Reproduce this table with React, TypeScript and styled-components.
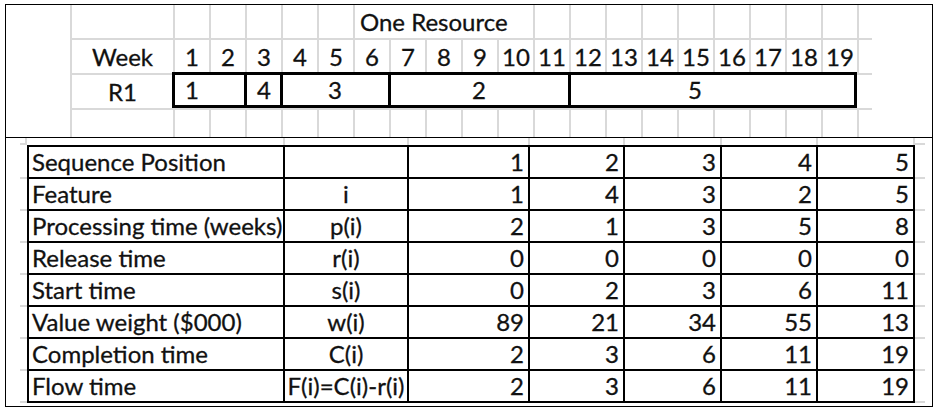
import React from "react";
import styled, { createGlobalStyle } from "styled-components";

const GlobalStyle = createGlobalStyle`
  html, body { margin: 0; padding: 0; background: #ffffff; }
  body { font-family: Lato, "Liberation Sans", sans-serif; color: #111111; }
`;

const GRID = "#d9d9d9";
const INK = "#111111";

const Page = styled.div`
  width: 940px;
  height: 416px;
  box-sizing: border-box;
  padding: 4px 0 0 5px;
  background: #ffffff;
`;

const Frame = styled.div`
  width: 928px;
  box-sizing: border-box;
  border: 1px solid #000;
  display: flex;
  flex-direction: column;
`;

/* ---------- top: one resource gantt ---------- */

const TopSection = styled.section`
  height: 133px;
  box-sizing: border-box;
  border-bottom: 1px solid #000;
`;

const GanttGrid = styled.div`
  display: grid;
  grid-template-columns: 64px 103px repeat(19, 36px) 15px 1fr;
  grid-template-rows: 33px 35px 35px 1fr;
  height: 100%;
`;

const GanttCell = styled.div<{ $left?: boolean; $top?: boolean; $span?: number; $align?: string }>`
  box-sizing: border-box;
  display: flex;
  align-items: center;
  justify-content: ${(p) => p.$align ?? "center"};
  grid-column: ${(p) => (p.$span ? `span ${p.$span}` : "auto")};
  border-left: ${(p) => (p.$left ? `2px solid ${GRID}` : "none")};
  border-top: ${(p) => (p.$top ? `2px solid ${GRID}` : "none")};
  padding: ${(p) => (p.$align === "flex-start" ? "0 0 0 5px" : "0")};
  font-size: 24px;
  line-height: 1;
  white-space: nowrap;
  color: ${INK};
  -webkit-text-stroke: 0.3px ${INK};
`;

const BoxCell = styled.div<{ $start?: boolean; $end?: boolean }>`
  box-sizing: border-box;
  display: flex;
  align-items: center;
  justify-content: center;
  border-top: 3px solid #000;
  border-bottom: 3px solid #000;
  border-left: ${(p) => (p.$start ? "3px solid #000" : "none")};
  border-right: ${(p) => (p.$end ? "3px solid #000" : "none")};
  margin-left: ${(p) => (p.$start ? "-1px" : "0")};
  margin-top: -1px;
  font-size: 24px;
  line-height: 1;
  color: ${INK};
  -webkit-text-stroke: 0.3px ${INK};
`;

/* ---------- bottom: sequence table ---------- */

const BottomSection = styled.section`
  height: 268px;
  box-sizing: border-box;
  padding-left: 14px;
`;

const Sheet = styled.div`
  display: grid;
  grid-template-columns: 7px 258px 124px 121px 95px 97px 96px 97px 10px;
  grid-template-rows: 7px 34px repeat(7, 32px);
`;

const Margin = styled.div<{ $right?: boolean; $bottom?: boolean }>`
  box-sizing: border-box;
  border-right: ${(p) => (p.$right ? `2px solid ${GRID}` : "none")};
  border-bottom: ${(p) => (p.$bottom ? `2px solid ${GRID}` : "none")};
`;

const DataCell = styled.div<{ $first?: boolean; $head?: boolean; $align: "left" | "center" | "right" }>`
  box-sizing: border-box;
  display: flex;
  align-items: center;
  justify-content: ${(p) => (p.$align === "left" ? "flex-start" : p.$align === "right" ? "flex-end" : "center")};
  padding: ${(p) => (p.$align === "left" ? "0 0 0 3px" : p.$align === "right" ? "0 4px 0 0" : "0")};
  border-right: 2px solid #000;
  border-bottom: 2px solid #000;
  border-left: ${(p) => (p.$first ? "2px solid #000" : "none")};
  border-top: ${(p) => (p.$head ? "2px solid #000" : "none")};
  font-size: 24px;
  line-height: 1;
  white-space: nowrap;
  color: ${INK};
  -webkit-text-stroke: 0.3px ${INK};
`;

const weeks = Array.from({ length: 19 }, (_, i) => i + 1);

// segments: [start week, length, label week, label]
const segments: Array<[number, number, number, string]> = [
  [1, 2, 1, "1"],
  [3, 1, 3, "4"],
  [4, 3, 5, "3"],
  [7, 5, 9, "2"],
  [12, 8, 15, "5"],
];

const rows: Array<[string, string, ...number[]]> = [
  ["Sequence Position", "", 1, 2, 3, 4, 5],
  ["Feature", "i", 1, 4, 3, 2, 5],
  ["Processing time (weeks)", "p(i)", 2, 1, 3, 5, 8],
  ["Release time", "r(i)", 0, 0, 0, 0, 0],
  ["Start time", "s(i)", 0, 2, 3, 6, 11],
  ["Value weight ($000)", "w(i)", 89, 21, 34, 55, 13],
  ["Completion time", "C(i)", 2, 3, 6, 11, 19],
  ["Flow time", "F(i)=C(i)-r(i)", 2, 3, 6, 11, 19],
];

function Gantt() {
  const cells: React.ReactNode[] = [];
  // row 1
  cells.push(<GanttCell key="r1-0" />);
  cells.push(<GanttCell key="r1-a" $left />);
  for (let w = 1; w <= 5; w++) cells.push(<GanttCell key={`r1-${w}`} $left />);
  cells.push(
    <GanttCell key="r1-title" $left $span={5} $align="flex-start">
      One Resource
    </GanttCell>
  );
  for (let w = 11; w <= 19; w++) cells.push(<GanttCell key={`r1-${w}`} $left />);
  cells.push(<GanttCell key="r1-p" $left />);
  cells.push(<GanttCell key="r1-e" />);

  // row 2
  cells.push(<GanttCell key="r2-0" />);
  cells.push(
    <GanttCell key="r2-a" $left $top>
      Week
    </GanttCell>
  );
  weeks.forEach((w) =>
    cells.push(
      <GanttCell key={`r2-${w}`} $left $top>
        {w}
      </GanttCell>
    )
  );
  cells.push(<GanttCell key="r2-p" $left $top />);
  cells.push(<GanttCell key="r2-e" />);

  // row 3
  cells.push(<GanttCell key="r3-0" />);
  cells.push(
    <GanttCell key="r3-a" $left $top>
      R1
    </GanttCell>
  );
  weeks.forEach((w) => {
    const seg = segments.find((s) => w >= s[0] && w < s[0] + s[1])!;
    const label = seg[2] === w ? seg[3] : "";
    cells.push(
      <BoxCell key={`r3-${w}`} $start={seg[0] === w} $end={w === 19}>
        {label}
      </BoxCell>
    );
  });
  cells.push(<GanttCell key="r3-p" $top />);
  cells.push(<GanttCell key="r3-e" />);

  // row 4
  cells.push(<GanttCell key="r4-0" />);
  cells.push(<GanttCell key="r4-a" $left $top />);
  weeks.forEach((w) => cells.push(<GanttCell key={`r4-${w}`} $left $top />));
  cells.push(<GanttCell key="r4-p" $left $top />);
  cells.push(<GanttCell key="r4-e" />);

  return <GanttGrid>{cells}</GanttGrid>;
}

function SequenceTable() {
  const cells: React.ReactNode[] = [];
  // top margin row
  cells.push(<Margin key="m-tl" $right $bottom />);
  for (let c = 0; c < 7; c++) cells.push(<Margin key={`m-t${c}`} $right />);
  cells.push(<Margin key="m-tr" $bottom />);

  rows.forEach((row, ri) => {
    const [label, sym, ...vals] = row;
    cells.push(<Margin key={`m-l${ri}`} $bottom />);
    cells.push(
      <DataCell key={`d${ri}-0`} $first $head={ri === 0} $align="left">
        {label}
      </DataCell>
    );
    cells.push(
      <DataCell key={`d${ri}-1`} $head={ri === 0} $align="center">
        {sym}
      </DataCell>
    );
    vals.forEach((v, vi) =>
      cells.push(
        <DataCell key={`d${ri}-${vi + 2}`} $head={ri === 0} $align="right">
          {v}
        </DataCell>
      )
    );
    cells.push(<Margin key={`m-r${ri}`} $bottom />);
  });

  return <Sheet>{cells}</Sheet>;
}

export default function App() {
  return (
    <>
      <GlobalStyle />
      <Page>
        <Frame>
          <TopSection>
            <Gantt />
          </TopSection>
          <BottomSection>
            <SequenceTable />
          </BottomSection>
        </Frame>
      </Page>
    </>
  );
}
